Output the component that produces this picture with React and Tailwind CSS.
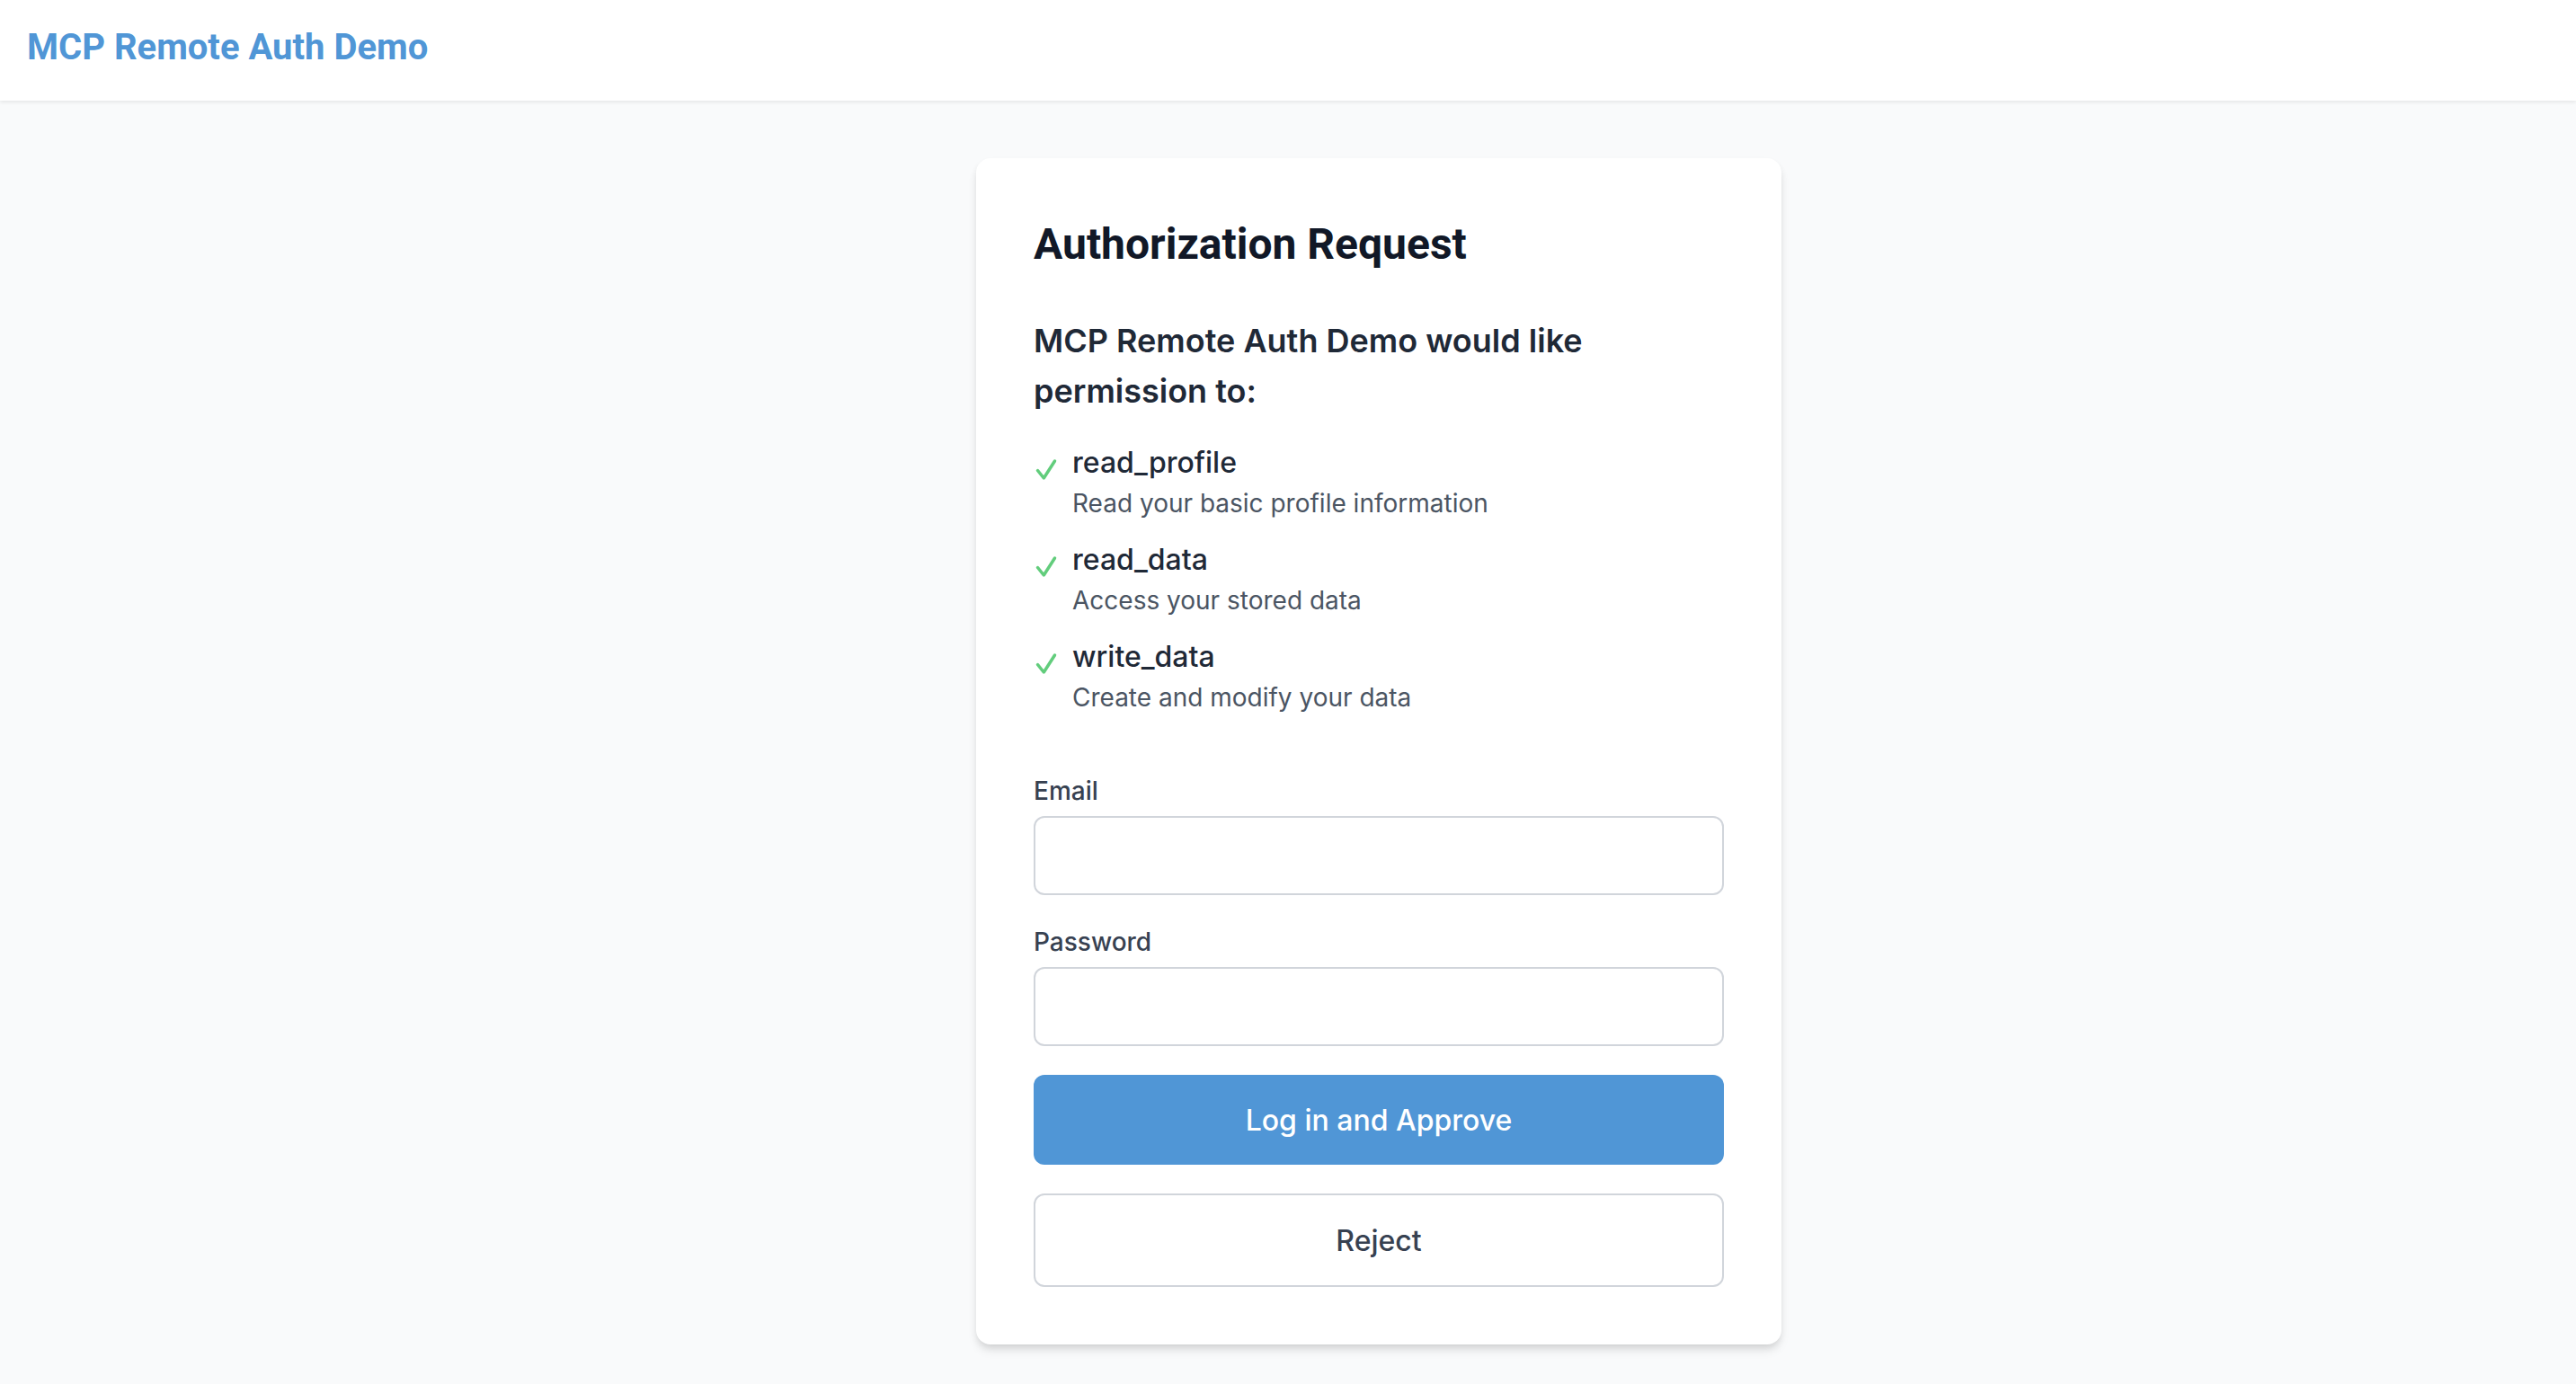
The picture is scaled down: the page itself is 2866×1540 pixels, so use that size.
const scopes = [
  { name: "read_profile", description: "Read your basic profile information" },
  { name: "read_data", description: "Access your stored data" },
  { name: "write_data", description: "Create and modify your data" },
];

function CheckIcon() {
  return (
    <svg viewBox="0 0 28 32" className="mt-4 mr-[15px] h-8 w-7 shrink-0" fill="none" aria-hidden="true">
      <path
        d="M4.5 16.5L11.3 25L23.5 6"
        stroke="#62cd7c"
        strokeWidth="3.5"
        strokeLinecap="round"
        strokeLinejoin="round"
      />
    </svg>
  );
}

function Field({ id, label, type }) {
  return (
    <div>
      <label htmlFor={id} className="mb-2 block text-[28px] leading-10 font-medium text-[#374151]">
        {label}
      </label>
      <input
        id={id}
        name={id}
        type={type}
        className="block h-[88px] w-full rounded-xl border-2 border-[#d1d5db] bg-white px-6 text-[32px]"
      />
    </div>
  );
}

export default function App() {
  return (
    <div className="flex min-h-screen flex-col bg-[#f9fafb] font-['Inter',sans-serif] text-[#1f2937]">
      <header className="flex h-28 items-start bg-white px-[30px] pt-[25px] shadow-[0_2px_4px_rgba(0,0,0,0.08)]">
        <a href="#" className="font-['Roboto',sans-serif] text-[40px] leading-14 font-bold text-[#5096d6]">
          MCP Remote Auth Demo
        </a>
      </header>
      <main className="flex flex-1 justify-center pt-16 pl-[202px]">
        <section className="w-[896px] self-start rounded-2xl bg-white p-16 shadow-[0_8px_12px_-2px_rgba(0,0,0,0.1),0_4px_8px_-2px_rgba(0,0,0,0.1)]">
          <h1 className="mb-[47px] font-['Roboto',sans-serif] text-[48px] leading-16 font-bold text-[#111827]">
            Authorization Request
          </h1>
          <h2 className="mb-7 text-[36px] leading-14 font-semibold">
            MCP Remote Auth Demo would like permission to:
          </h2>
          <ul className="mb-[63px] space-y-[18px]">
            {scopes.map((scope) => (
              <li key={scope.name} className="flex items-start">
                <CheckIcon />
                <div>
                  <p className="text-[32px] leading-12 font-medium">{scope.name}</p>
                  <p className="text-[28px] leading-[42px] text-[#4b5563]">{scope.description}</p>
                </div>
              </li>
            ))}
          </ul>
          <form className="space-y-8">
            <Field id="email" label="Email" type="email" />
            <Field id="password" label="Password" type="password" />
            <button type="button" className="block h-[100px] w-full rounded-xl bg-[#5096d6] pt-0.5 text-[32px] font-medium text-white">
              Log in and Approve
            </button>
            <button type="button" className="block h-[104px] w-full rounded-xl border-2 border-[#d1d5db] bg-white pt-0.5 text-[32px] font-medium text-[#374151]">
              Reject
            </button>
          </form>
        </section>
      </main>
    </div>
  );
}
